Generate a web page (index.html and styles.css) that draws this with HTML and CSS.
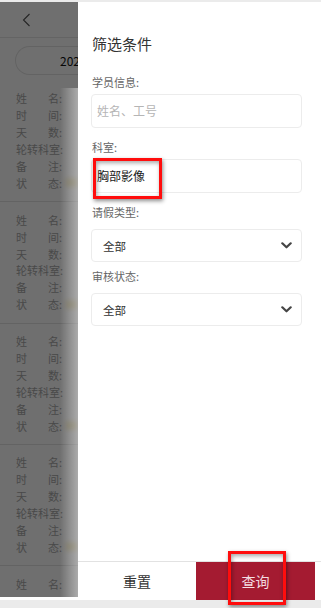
FILE: index.html
```html
<!DOCTYPE html>
<html lang="zh">
<head>
<meta charset="utf-8">
<title>筛选条件</title>
<link rel="stylesheet" href="styles.css">
</head>
<body>
<div class="device">
  <div class="screen">
    <div class="page">
      <header class="page-head">
        <svg class="back" width="10" height="14" viewBox="0 0 10 14"><polyline points="7.5,1 1.5,7 7.5,13" fill="none" stroke="#555" stroke-width="1.1"/></svg>
      </header>
      <div class="range"><span class="range-text">2024</span></div>
      <div class="list">
        <div class="card">
          <div class="row"><span class="k"><i>姓</i><i>名:</i></span></div>
          <div class="row"><span class="k"><i>时</i><i>间:</i></span></div>
          <div class="row"><span class="k"><i>天</i><i>数:</i></span></div>
          <div class="row"><span class="k"><i>轮转科室:</i></span></div>
          <div class="row"><span class="k"><i>备</i><i>注:</i></span></div>
          <div class="row"><span class="k"><i>状</i><i>态:</i></span><span class="st"></span></div>
        </div>
        <div class="card">
          <div class="row"><span class="k"><i>姓</i><i>名:</i></span></div>
          <div class="row"><span class="k"><i>时</i><i>间:</i></span></div>
          <div class="row"><span class="k"><i>天</i><i>数:</i></span></div>
          <div class="row"><span class="k"><i>轮转科室:</i></span></div>
          <div class="row"><span class="k"><i>备</i><i>注:</i></span></div>
          <div class="row"><span class="k"><i>状</i><i>态:</i></span><span class="st"></span></div>
        </div>
        <div class="card">
          <div class="row"><span class="k"><i>姓</i><i>名:</i></span></div>
          <div class="row"><span class="k"><i>时</i><i>间:</i></span></div>
          <div class="row"><span class="k"><i>天</i><i>数:</i></span></div>
          <div class="row"><span class="k"><i>轮转科室:</i></span></div>
          <div class="row"><span class="k"><i>备</i><i>注:</i></span></div>
          <div class="row"><span class="k"><i>状</i><i>态:</i></span><span class="st"></span></div>
        </div>
        <div class="card">
          <div class="row"><span class="k"><i>姓</i><i>名:</i></span></div>
          <div class="row"><span class="k"><i>时</i><i>间:</i></span></div>
          <div class="row"><span class="k"><i>天</i><i>数:</i></span></div>
          <div class="row"><span class="k"><i>轮转科室:</i></span></div>
          <div class="row"><span class="k"><i>备</i><i>注:</i></span></div>
          <div class="row"><span class="k"><i>状</i><i>态:</i></span><span class="st"></span></div>
        </div>
        <div class="card card-last">
          <div class="row"><span class="k"><i>姓</i><i>名:</i></span></div>
        </div>
      </div>
    </div>
    <div class="mask"></div>
    <div class="haze"></div>
    <aside class="drawer">
      <div class="drawer-body">
        <h2 class="drawer-title">筛选条件</h2>
        <div class="field">
          <div class="field-label">学员信息:</div>
          <div class="input placeholder">姓名、工号</div>
        </div>
        <div class="field">
          <div class="field-label">科室:</div>
          <div class="input filled">胸部影像</div>
        </div>
        <div class="field field-select">
          <div class="field-label">请假类型:</div>
          <div class="select"><span>全部</span>
            <svg width="11" height="7" viewBox="0 0 11 7"><polyline points="1.3,1.3 5.5,5.3 9.7,1.3" fill="none" stroke="#444" stroke-width="2.2" stroke-linecap="round" stroke-linejoin="round"/></svg>
          </div>
        </div>
        <div class="field field-select">
          <div class="field-label">审核状态:</div>
          <div class="select"><span>全部</span>
            <svg width="11" height="7" viewBox="0 0 11 7"><polyline points="1.3,1.3 5.5,5.3 9.7,1.3" fill="none" stroke="#444" stroke-width="2.2" stroke-linecap="round" stroke-linejoin="round"/></svg>
          </div>
        </div>
      </div>
      <div class="drawer-foot">
        <button class="btn btn-reset">重置</button>
        <button class="btn btn-query">查询</button>
      </div>
    </aside>
  </div>
  <div class="mark mark-dept"></div>
  <div class="mark mark-query"></div>
</div>
</body>
</html>
```
FILE: styles.css
```css
* { box-sizing: border-box; margin: 0; padding: 0; }
html, body {
  width: 321px;
  height: 608px;
  overflow: hidden;
}
body {
  background: #ebebeb;
  font-family: "Noto Sans CJK SC", "Noto Sans", sans-serif;
  color: #333;
}
.device {
  position: relative;
  height: 608px;
  padding-top: 2px;
}
.screen {
  position: relative;
  height: 598px;
  overflow: hidden;
  background: #fff;
}

/* underlying page (only its left strip shows beside the drawer) */
.page {
  width: 78px;
  height: 595px;
  overflow: hidden;
}
.page-head {
  height: 36px;
  border-bottom: 1px solid #e6e6e6;
  display: flex;
  align-items: center;
  padding-left: 22px;
}
.range {
  margin: 8px 0 0 15px;
  height: 29px;
  border: 1px solid #e3e3e3;
  border-right: none;
  border-radius: 15px 0 0 15px;
  font-size: 12px;
  line-height: 27px;
  padding-left: 44px;
  color: #111;
  white-space: nowrap;
}
.list { padding-top: 6px; }
.card {
  padding: 9px 0 10px 16px;
  border-bottom: 1px solid #e4e4e4;
}
.card-last { border-bottom: none; }
.row {
  display: flex;
  height: 16.9px;
  align-items: center;
  font-size: 11px;
  color: #a8a8a8;
  white-space: nowrap;
}
.k {
  display: flex;
  justify-content: space-between;
  width: 46px;
  flex: none;
}
.k i { font-style: normal; }
.st {
  margin-left: 4px;
  width: 14px;
  height: 9px;
  background: #f3dc86;
  opacity: 0.5;
  filter: blur(2px);
}

.mask {
  position: absolute;
  left: 0; top: 0; right: 0; bottom: 3px;
  background: rgba(0, 0, 0, 0.565);
}
.haze {
  position: absolute;
  left: 60px; width: 18px; top: 86px; bottom: 3px;
  background: linear-gradient(to right, rgba(255,255,255,0), rgba(255,255,255,0.42));
}

/* drawer */
.drawer {
  position: absolute;
  left: 78px; top: 0; right: 0; bottom: 0;
  background: #fff;
  display: flex;
  flex-direction: column;
}
.drawer-body {
  flex: 1;
  padding: 32px 19px 0 13px;
}
.drawer-title {
  font-size: 15px;
  font-weight: normal;
  line-height: 20px;
  color: #333;
  padding-left: 1px;
  margin-bottom: 20px;
}
.field { margin-bottom: 11px; }
.field-select { margin-bottom: 6px; }
.field-label {
  font-size: 11px;
  line-height: 16px;
  color: #666;
  padding-left: 1px;
}
.input {
  margin-top: 4px;
  height: 34px;
  border: 1px solid #ececec;
  border-radius: 4px;
  font-size: 12px;
  line-height: 32px;
  padding-left: 5px;
}
.placeholder { color: #b5b5b5; }
.filled { color: #1a1a1a; }
.select {
  margin-top: 9px;
  height: 33px;
  border: 1px solid #ececec;
  border-radius: 4px;
  font-size: 11.5px;
  color: #333;
  display: flex;
  align-items: center;
  justify-content: space-between;
  padding: 0 9px 0 11px;
}
.drawer-foot {
  display: flex;
  height: 39px;
  border-top: 1px solid #e2e2e2;
  padding-right: 6px;
}
.btn {
  border: none;
  font-family: inherit;
  font-size: 14px;
  height: 38px;
}
.btn-reset {
  flex: 0 0 118px;
  background: #fff;
  color: #333;
}
.btn-query {
  flex: 1;
  background: #a41b31;
  color: #f3dde1;
}

/* annotation marks */
.mark {
  position: absolute;
  border: 3px solid #ff0d0d;
  box-shadow: 1px 2px 4px rgba(0,0,0,0.45), inset 1px 2px 4px rgba(0,0,0,0.35);
}
.mark-dept { left: 93px; top: 158px; width: 69px; height: 41px; }
.mark-query { left: 228px; top: 551px; width: 58px; height: 54px; }
```
